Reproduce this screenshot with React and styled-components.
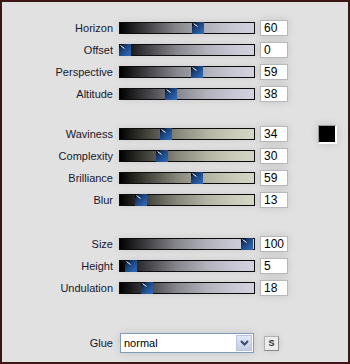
import React from "react";
import styled, { createGlobalStyle } from "styled-components";

const Global = createGlobalStyle`
  html, body { margin: 0; padding: 0; background: #e0e0e0; }
  body { font-family: "Liberation Sans", Arial, sans-serif; }
`;

const Frame = styled.div`
  width: 350px;
  height: 364px;
  box-sizing: border-box;
  border: 2px solid #3e1616;
  background: #e1e1e1;
  padding-top: 15px;
  display: flex;
  flex-direction: column;
`;

const Group = styled.div`
  display: flex;
  flex-direction: column;
  margin-top: ${(p) => p.$gap || 0}px;
`;

const Row = styled.div`
  display: flex;
  align-items: center;
  height: ${(p) => p.$h || 22}px;
`;

const Label = styled.div`
  width: 117px;
  box-sizing: border-box;
  padding-right: 6px;
  text-align: right;
  font-size: 11px;
  color: #17172e;
  white-space: nowrap;
`;

const Track = styled.div`
  position: relative;
  width: 136px;
  height: 12px;
  box-sizing: border-box;
  border: 1px solid #0c0c0c;
  background: ${(p) =>
    p.$tone === "olive"
      ? "linear-gradient(to right, #000 0%, #3c3c36 18%, #85857a 42%, #b4b4a4 65%, #cacbb8 85%, #d4d6c4 100%)"
      : "linear-gradient(to right, #000 0%, #3a3a3e 18%, #85858c 42%, #b2b2bc 65%, #c8c8d4 85%, #d2d2de 100%)"};
  box-shadow: 0 0 7px rgba(0, 0, 0, 0.1);
`;

const Thumb = styled.svg`
  position: absolute;
  top: -1px;
  display: block;
`;

const Value = styled.div`
  margin-left: 5px;
  width: 28px;
  height: 16px;
  box-sizing: border-box;
  border: 1px solid #b8b8b8;
  background: #fff;
  font-size: 12px;
  line-height: 14px;
  padding-left: 3px;
  color: #000;
  box-shadow: 0 0 8px rgba(0, 0, 0, 0.13);
`;

const Swatch = styled.div`
  margin-left: 30px;
  width: 19px;
  height: 19px;
  box-sizing: border-box;
  background: #000;
  border-top: 1px solid #9a9a9a;
  border-left: 1px solid #9a9a9a;
  border-right: 2px solid #fff;
  border-bottom: 2px solid #fff;
  box-shadow: 0 0 8px rgba(0, 0, 0, 0.14);
`;

const Select = styled.div`
  display: flex;
  align-items: stretch;
  width: 134px;
  height: 20px;
  margin-left: 1px;
  box-sizing: border-box;
  border: 1px solid #7f9db9;
  background: #fff;
  box-shadow: 0 0 8px rgba(0, 0, 0, 0.12);
`;

const SelectText = styled.div`
  flex: 1;
  font-size: 11px;
  line-height: 18px;
  padding-left: 3px;
  color: #000;
`;

const DropBtn = styled.div`
  width: 16px;
  margin: 1px;
  box-sizing: border-box;
  border: 1px solid #b9c5dd;
  background: linear-gradient(to bottom, #e2e8f6, #c3cde6);
  display: flex;
  align-items: center;
  justify-content: center;
`;

const SmallBtn = styled.div`
  margin-left: 10px;
  width: 15px;
  height: 15px;
  box-sizing: border-box;
  border: 1px solid #b0b0b0;
  border-right-color: #8a8a8a;
  border-bottom-color: #8a8a8a;
  background: #ececec;
  font-size: 9px;
  font-weight: bold;
  line-height: 13px;
  text-align: center;
  color: #2a2a2a;
  box-shadow: 0 0 6px rgba(0, 0, 0, 0.12);
`;

const ThumbIcon = ({ left }) => (
  <Thumb width="12" height="12" viewBox="0 0 12 12" style={{ left }}>
    <defs>
      <linearGradient id="tg" x1="0" y1="0" x2="1" y2="1">
        <stop offset="0" stopColor="#0a1a36" />
        <stop offset="0.5" stopColor="#1f4a88" />
        <stop offset="1" stopColor="#3470bc" />
      </linearGradient>
    </defs>
    <rect x="0" y="0" width="12" height="12" fill="url(#tg)" />
    <polygon points="0,0 5,0 0,4" fill="#060e1e" />
    <line x1="1.5" y1="1.5" x2="5.5" y2="4.5" stroke="#fff" strokeWidth="1" />
    <polygon points="12,12 12,5 5,12" fill="#2a60aa" opacity="0.5" />
  </Thumb>
);

const Slider = ({ label, value, tone, extra }) => (
  <Row>
    <Label>{label}</Label>
    <Track $tone={tone}>
      <ThumbIcon left={-1 + Math.round((value / 100) * 122)} />
    </Track>
    <Value>{value}</Value>
    {extra}
  </Row>
);

export default function App() {
  return (
    <>
      <Global />
      <Frame>
        <Group>
          <Slider label="Horizon" value={60} />
          <Slider label="Offset" value={0} />
          <Slider label="Perspective" value={59} />
          <Slider label="Altitude" value={38} />
        </Group>
        <Group $gap={18}>
          <Slider label="Waviness" value={34} tone="olive" extra={<Swatch />} />
          <Slider label="Complexity" value={30} tone="olive" />
          <Slider label="Brilliance" value={59} tone="olive" />
          <Slider label="Blur" value={13} tone="olive" />
        </Group>
        <Group $gap={22}>
          <Slider label="Size" value={100} />
          <Slider label="Height" value={5} />
          <Slider label="Undulation" value={18} />
        </Group>
        <Group $gap={33}>
          <Row>
            <Label>Glue</Label>
            <Select>
              <SelectText>normal</SelectText>
              <DropBtn>
                <svg width="9" height="6" viewBox="0 0 9 6">
                  <polyline points="1,1 4.5,4.5 8,1" fill="none" stroke="#3a4a70" strokeWidth="2" />
                </svg>
              </DropBtn>
            </Select>
            <SmallBtn>S</SmallBtn>
          </Row>
        </Group>
      </Frame>
    </>
  );
}
